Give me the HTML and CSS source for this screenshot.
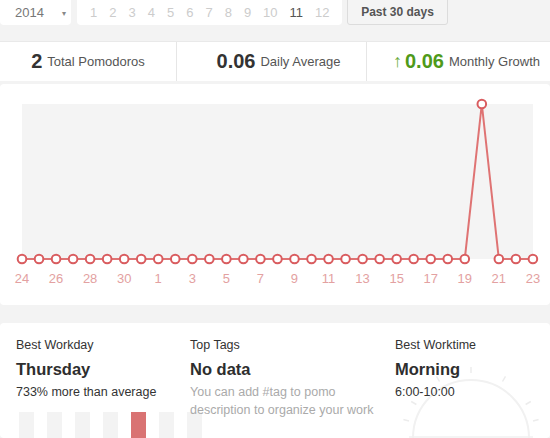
FILE: index.html
```html
<!DOCTYPE html>
<html lang="en">
<head>
    <meta charset="UTF-8">
    <meta name="viewport" content="width=device-width, initial-scale=1.0">
    <title>Statistics</title>
    <link rel="stylesheet" href="styles.css">
</head>
<body>
    <!-- period picker -->
    <div class="toolbar">
        <div class="year-select">2014 <span class="caret">&#9662;</span></div>
        <div class="months">
            <span>1</span><span>2</span><span>3</span><span>4</span><span>5</span><span>6</span>
            <span>7</span><span>8</span><span>9</span><span>10</span><span class="active">11</span><span>12</span>
        </div>
        <button class="range-btn">Past 30 days</button>
    </div>

    <!-- summary -->
    <div class="summary">
        <div class="stat stat-total"><b>2</b> Total Pomodoros</div>
        <div class="stat stat-avg"><b>0.06</b> Daily Average</div>
        <div class="stat stat-growth"><span class="arrow">&uarr;</span> <b>0.06</b> Monthly Growth</div>
    </div>

    <!-- daily chart -->
    <div class="card chart-card">
        <svg id="chart" width="550" height="221" viewBox="0 0 550 221">
            <rect x="22" y="20" width="511" height="155" fill="#f4f4f4"></rect>
        </svg>
    </div>

    <!-- insights -->
    <div class="card insights">
        <div class="insight">
            <div class="insight-label">Best Workday</div>
            <div class="insight-value">Thursday</div>
            <div class="insight-note">733% more than average</div>
            <div class="week-bars">
                <span></span><span></span><span></span><span></span>
                <span class="best"></span><span></span><span></span>
            </div>
        </div>
        <div class="insight">
            <div class="insight-label">Top Tags</div>
            <div class="insight-value">No data</div>
            <div class="insight-note muted">You can add #tag to pomo description to organize your work</div>
        </div>
        <div class="insight insight-time">
            <svg class="dial" width="160" height="80" viewBox="0 0 160 80">
                <circle cx="80" cy="80" r="58" fill="none" stroke="#f1f1f1" stroke-width="2"></circle>
                <g stroke="#ececec" stroke-width="1.5">
                    <line x1="80" y1="9" x2="80" y2="15"></line>
                    <line x1="45.5" y1="18.3" x2="48.5" y2="23.5"></line>
                    <line x1="114.5" y1="18.3" x2="111.5" y2="23.5"></line>
                    <line x1="20.2" y1="43.5" x2="25.4" y2="46.5"></line>
                    <line x1="139.8" y1="43.5" x2="134.6" y2="46.5"></line>
                    <line x1="12.4" y1="61.5" x2="18" y2="63"></line>
                    <line x1="147.6" y1="61.5" x2="142" y2="63"></line>
                </g>
                <line x1="18" y1="79" x2="142" y2="79" stroke="#f1f1f1" stroke-width="1.5"></line>
            </svg>
            <div class="insight-label">Best Worktime</div>
            <div class="insight-value">Morning</div>
            <div class="insight-note">6:00-10:00</div>
        </div>
    </div>

    <script>
        // last 30 days: Oct 24 .. Nov 23
        const days = [];
        for (let d = 24; d <= 31; d++) days.push(d);
        for (let d = 1; d <= 23; d++) days.push(d);
        const counts = days.map((d, i) => i === 27 ? 2 : 0);

        const svg = document.getElementById('chart');
        const ns = 'http://www.w3.org/2000/svg';
        const plotLeft = 22, step = 17.03, plotBase = 175, plotTop = 20;
        const max = Math.max(...counts);
        const pts = counts.map((c, i) => [plotLeft + i * step, plotBase - (c / max) * (plotBase - plotTop)]);

        const line = document.createElementNS(ns, 'polyline');
        line.setAttribute('points', pts.map(p => p.join(',')).join(' '));
        line.setAttribute('fill', 'none');
        line.setAttribute('stroke', '#df7373');
        line.setAttribute('stroke-width', '2');
        svg.appendChild(line);

        pts.forEach((p, i) => {
            const dot = document.createElementNS(ns, 'circle');
            dot.setAttribute('cx', p[0]);
            dot.setAttribute('cy', p[1]);
            dot.setAttribute('r', '4.3');
            dot.setAttribute('fill', '#fff');
            dot.setAttribute('stroke', '#d95c5f');
            dot.setAttribute('stroke-width', '2');
            svg.appendChild(dot);

            if (i % 2 === 0) {
                const t = document.createElementNS(ns, 'text');
                t.setAttribute('x', p[0]);
                t.setAttribute('y', 199);
                t.setAttribute('text-anchor', 'middle');
                t.setAttribute('class', 'axis-label');
                t.textContent = days[i];
                svg.appendChild(t);
            }
        });
    </script>
</body>
</html>
```

FILE: styles.css
```css
* {
    box-sizing: border-box;
    margin: 0;
    padding: 0;
}

body {
    font-family: 'Liberation Sans', Arial, sans-serif;
    font-size: 12.5px;
    color: #333;
    background-color: #f3f3f3;
    width: 550px;
    height: 438px;
    overflow: hidden;
}

/* toolbar */
.toolbar {
    display: flex;
    align-items: flex-start;
    height: 25px;
}

.year-select {
    width: 71px;
    height: 25px;
    background: #fff;
    border-radius: 0 0 4px 4px;
    color: #777;
    font-size: 13px;
    line-height: 25px;
    padding-left: 15px;
}

.caret {
    font-size: 8px;
    color: #888;
    margin-left: 14px;
    vertical-align: 1px;
}

.months {
    width: 265px;
    height: 25px;
    margin-left: 6px;
    background: #fff;
    border-radius: 0 0 4px 4px;
    display: flex;
    gap: 12px;
    padding-left: 13px;
    font-size: 13px;
    line-height: 25px;
    color: #ccc;
}

.months .active {
    color: #555;
}

.range-btn {
    margin-left: 5px;
    width: 101px;
    height: 26px;
    margin-top: -1px;
    background: #f4f4f4;
    border: 1px solid #dcdcdc;
    border-radius: 0 0 3px 3px;
    font-family: inherit;
    font-size: 12px;
    font-weight: bold;
    color: #555;
}

/* summary */
.summary {
    margin-top: 16px;
    height: 40px;
    background: #fff;
    border-top: 1px solid #e9e9e9;
    display: grid;
    grid-template-columns: 176px 190px 184px;
}

.stat {
    display: flex;
    align-items: center;
    justify-content: center;
    gap: 5px;
    color: #555;
    font-size: 13px;
}

.stat + .stat {
    border-left: 1px solid #e6e6e6;
}

.stat b {
    font-size: 20px;
    color: #333;
}

.stat-avg {
    padding-left: 14px;
}

.stat-growth {
    padding-left: 16px;
}

.stat-growth b {
    color: #4f9a1a;
}

.stat-growth .arrow {
    color: #6aab3a;
    font-size: 18px;
    margin-right: -2px;
}

/* cards */
.card {
    background: #fff;
    border-radius: 4px;
}

.chart-card {
    margin-top: 3px;
    height: 221px;
}

.chart-card svg {
    display: block;
}

.axis-label {
    font-family: 'Liberation Sans', Arial, sans-serif;
    font-size: 13px;
    fill: #e3a1a1;
}

.insights {
    margin-top: 18px;
    height: 115px;
    overflow: hidden;
    display: grid;
    grid-template-columns: 174px 205px 1fr;
    padding: 14px 0 0 16px;
}

.insight {
    position: relative;
}

.insight-label {
    line-height: 16px;
    color: #333;
}

.insight-value {
    margin-top: 7px;
    font-size: 16.5px;
    font-weight: bold;
    line-height: 18px;
    color: #2e2e2e;
}

.insight-note {
    margin-top: 5px;
    line-height: 18px;
    color: #333;
}

.insight-note.muted {
    color: #aaa;
}

.week-bars {
    display: flex;
    gap: 13px;
    margin-top: 11px;
    padding-left: 3px;
    width: 200px;
}

.week-bars span {
    flex: none;
    width: 15px;
    height: 40px;
    background: #f3f3f3;
}

.week-bars .best {
    background: #d97373;
}

.insight-time > div {
    position: relative;
}

.dial {
    position: absolute;
    left: -4px;
    top: 21px;
}
```
